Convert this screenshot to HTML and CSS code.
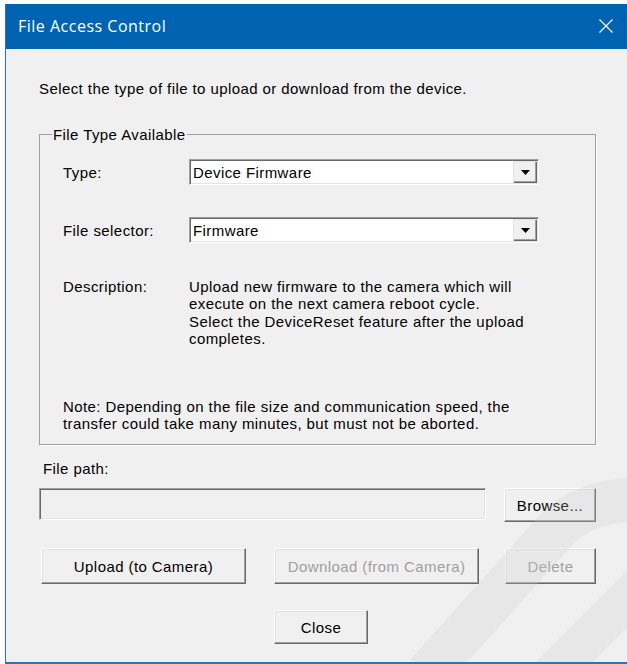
FILE: index.html
```html
<!DOCTYPE html>
<html lang="en">
<head>
<meta charset="utf-8">
<title>File Access Control</title>
<link rel="stylesheet" href="styles.css">
</head>
<body>
<div class="window">
  <header class="titlebar">
    <span class="title">File Access Control</span>
    <svg class="close-x" width="14" height="14" viewBox="0 0 14 14" aria-hidden="true">
      <path d="M0.5 0.5 L13.5 13.5 M13.5 0.5 L0.5 13.5" stroke="#fff" stroke-width="1.2" fill="none"/>
    </svg>
  </header>

  <main class="client">
    <p class="intro">Select the type of file to upload or download from the device.</p>

    <fieldset class="group">
      <legend>File Type Available</legend>
      <div class="group-body">
        <div class="field-row">
          <span class="label">Type:</span>
          <div class="combo">
            <span class="combo-value">Device Firmware</span>
            <span class="combo-btn">
              <svg width="9" height="5" viewBox="0 0 9 5" aria-hidden="true"><polygon points="0,0 9,0 4.5,5" fill="#000"/></svg>
            </span>
          </div>
        </div>

        <div class="field-row selector-row">
          <span class="label">File selector:</span>
          <div class="combo">
            <span class="combo-value">Firmware</span>
            <span class="combo-btn">
              <svg width="9" height="5" viewBox="0 0 9 5" aria-hidden="true"><polygon points="0,0 9,0 4.5,5" fill="#000"/></svg>
            </span>
          </div>
        </div>

        <div class="desc-row">
          <span class="label">Description:</span>
          <p class="desc">Upload new firmware to the camera which will<br>execute on the next camera reboot cycle.<br>Select the DeviceReset feature after the upload<br>completes.</p>
        </div>

        <p class="note">Note: Depending on the file size and communication speed, the<br>transfer could take many minutes, but must not be aborted.</p>
      </div>
    </fieldset>

    <div class="path-label">File path:</div>
    <div class="path-row">
      <div class="path-input"></div>
      <button class="btn browse">Browse...</button>
    </div>

    <div class="action-row">
      <button class="btn wide">Upload (to Camera)</button>
      <button class="btn wide" disabled>Download (from Camera)</button>
      <button class="btn small" disabled>Delete</button>
    </div>

    <div class="close-row">
      <button class="btn close-btn">Close</button>
    </div>
  </main>

  <svg class="watermark" width="220" height="190" viewBox="0 0 220 190" aria-hidden="true">
    <path d="M20 200 L150 55 Q175 28 230 25" stroke="rgba(205,205,205,0.25)" stroke-width="44" fill="none"/>
    <path d="M140 205 L235 110" stroke="rgba(205,205,205,0.25)" stroke-width="40" fill="none"/>
  </svg>
</div>
</body>
</html>
```

FILE: styles.css
```css
html, body {
  margin: 0;
  height: 100%;
  background: #ffffff;
  overflow: hidden;
}

.window {
  position: relative;
  box-sizing: border-box;
  margin: 4px 0 0 5px;
  width: 622px;
  height: 660px;
  border-left: 1px solid #2a73c0;
  border-bottom: 2px solid #2a73c0;
  background: #f0f0f0;
  display: flex;
  flex-direction: column;
  overflow: hidden;
  font-family: "Liberation Sans", Arial, sans-serif;
  font-size: 15px;
  letter-spacing: 0.42px;
  color: #000;
}

/* caption bar */
.titlebar {
  flex: none;
  height: 45px;
  background: #0063b1;
  display: flex;
  align-items: center;
  justify-content: space-between;
  padding: 0 14px 0 12px;
}

.title {
  font-family: "Open Sans", "Noto Sans", sans-serif;
  font-size: 16px;
  letter-spacing: 0.5px;
  color: #ffffff;
  line-height: 20px;
  margin-top: -2px;
}

.close-x {
  display: block;
  margin-top: -2px;
}

/* dialog client area */
.client {
  flex: 1;
  padding: 31px 0 0 33px;
  line-height: 17px;
}

.intro {
  margin: 0;
}

.group {
  box-sizing: border-box;
  width: 557px;
  margin: 29px 0 0;
  padding: 0 0 12px;
  border: 1px solid #a0a0a0;
  box-shadow: 1px 1px 0 #ffffff;
}

.group legend {
  margin-left: 12px;
  padding: 0 1px;
}

.group-body {
  padding: 16px 0 0 23px;
}

.field-row {
  display: grid;
  grid-template-columns: 126px 350px;
  align-items: center;
}

.selector-row {
  margin-top: 32px;
}

/* sunken drop-down list */
.combo {
  box-sizing: border-box;
  height: 26px;
  background: #ffffff;
  border: 1px solid;
  border-color: #a0a0a0 #ffffff #ffffff #a0a0a0;
  box-shadow: inset 1px 1px 0 #696969, inset -1px -1px 0 #e3e3e3;
  display: flex;
  align-items: center;
  padding: 1px 1px 1px 3px;
}

.combo-value {
  flex: 1;
}

.combo-btn {
  box-sizing: border-box;
  width: 24px;
  height: 22px;
  background: #f0f0f0;
  box-shadow: inset 1px 1px 0 #e3e3e3, inset -1px -1px 0 #696969, inset -2px -2px 0 #a0a0a0;
  display: flex;
  align-items: center;
  justify-content: center;
}

.combo-btn svg {
  display: block;
}

.desc-row {
  display: grid;
  grid-template-columns: 126px auto;
  margin-top: 35px;
  line-height: 17.4px;
}

.desc {
  margin: 0;
}

.note {
  margin: 50px 0 0;
  line-height: 17.4px;
}

.path-label {
  margin-top: 15px;
  padding-left: 4px;
}

.path-row {
  display: flex;
  align-items: flex-start;
  gap: 18px;
  margin-top: 11px;
}

.path-input {
  box-sizing: border-box;
  width: 447px;
  height: 32px;
  background: #f0f0f0;
  border: 1px solid;
  border-color: #a0a0a0 #ffffff #ffffff #a0a0a0;
  box-shadow: inset 1px 1px 0 #696969, inset -1px -1px 0 #e3e3e3;
}

/* raised push buttons */
.btn {
  box-sizing: border-box;
  height: 36px;
  margin: 0;
  padding: 0;
  background: #f0f0f0;
  border: 1px solid;
  border-color: #ffffff #696969 #696969 #ffffff;
  box-shadow: inset -1px -1px 0 #a0a0a0, inset 1px 1px 0 #e3e3e3;
  font: inherit;
  letter-spacing: inherit;
  color: #000;
}

.btn:disabled {
  color: #a0a0a0;
}

.browse {
  width: 92px;
  height: 34px;
}

.action-row {
  display: flex;
  margin-top: 26px;
  padding-left: 2px;
}

.wide {
  width: 205px;
}

.action-row .wide + .wide {
  margin-left: 28px;
}

.small {
  width: 91px;
  margin-left: 26px;
}

.close-row {
  margin-top: 26px;
  padding-left: 235px;
}

.close-btn {
  width: 94px;
  height: 34px;
}

.watermark {
  position: absolute;
  right: 0;
  bottom: -2px;
  pointer-events: none;
}
```
